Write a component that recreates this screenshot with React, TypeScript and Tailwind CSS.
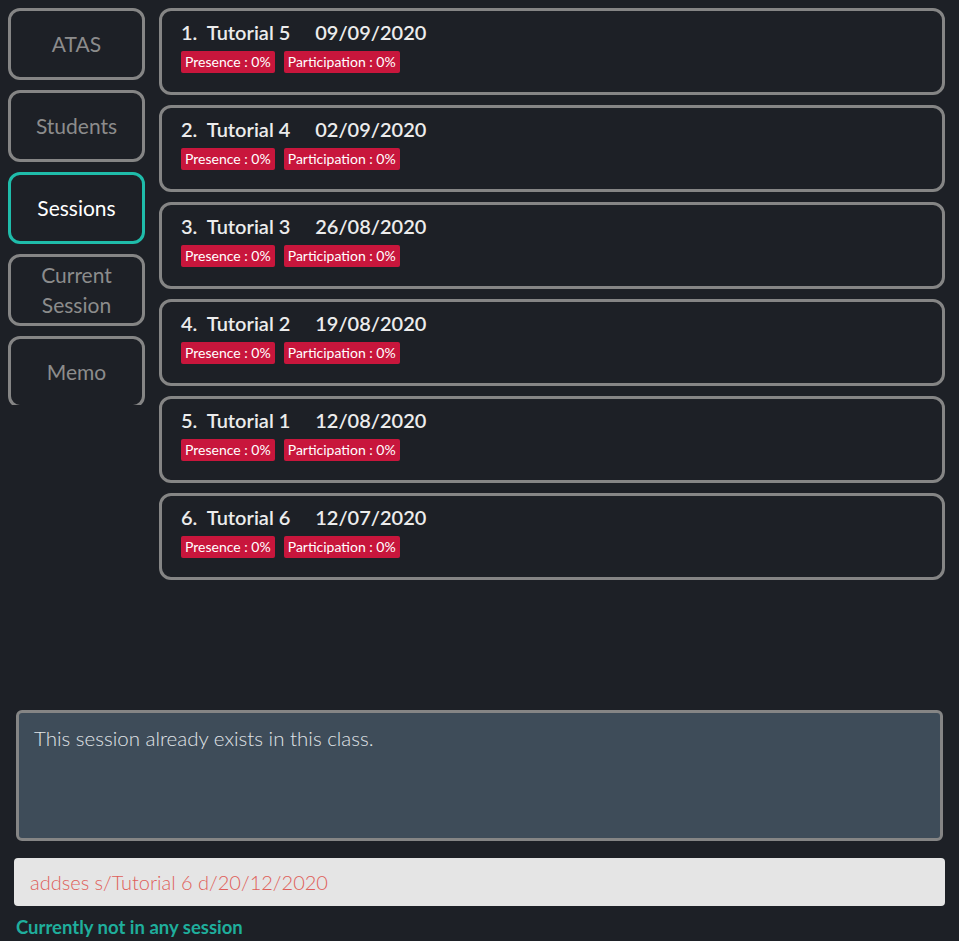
const sessions = [
  { name: "Tutorial 5", date: "09/09/2020" },
  { name: "Tutorial 4", date: "02/09/2020" },
  { name: "Tutorial 3", date: "26/08/2020" },
  { name: "Tutorial 2", date: "19/08/2020" },
  { name: "Tutorial 1", date: "12/08/2020" },
  { name: "Tutorial 6", date: "12/07/2020" },
];

const tabs = [
  { label: "ATAS", active: false },
  { label: "Students", active: false },
  { label: "Sessions", active: true },
  { label: "Current Session", active: false },
  { label: "Memo", active: false },
];

function Tab({ label, active }: { label: string; active: boolean }) {
  return (
    <div
      className={
        active
          ? "flex h-[72px] w-[137px] shrink-0 items-center justify-center rounded-[12px] border-[3px] border-[#1fbcaa] px-3 text-center text-[21px] leading-[30px] text-white"
          : "flex h-[72px] w-[137px] shrink-0 items-center justify-center rounded-[12px] border-[3px] border-[#858585] px-3 text-center text-[21px] leading-[30px] text-[#8c8c8c]"
      }
    >
      {label}
    </div>
  );
}

function SessionCard({ index, name, date }: { index: number; name: string; date: string }) {
  return (
    <div className="h-[87px] shrink-0 rounded-[12px] border-[3px] border-[#858585] pl-[19px] pt-[8px]">
      <div className="whitespace-pre text-[20px] font-semibold leading-[26px] text-[#ececec]">
        {`${index}.  ${name}     ${date}`}
      </div>
      <div className="mt-[6px] flex gap-[9px] text-[14px] leading-[22px] text-white">
        <span className="rounded-[2px] bg-[#c8163c] px-[4px]">Presence : 0%</span>
        <span className="rounded-[2px] bg-[#c8163c] px-[4px]">Participation : 0%</span>
      </div>
    </div>
  );
}

export default function App() {
  return (
    <div
      className="flex h-[941px] w-[959px] flex-col overflow-hidden bg-[#1d2026]"
      style={{ fontFamily: "Lato, 'Open Sans', sans-serif" }}
    >
      <div className="flex h-[700px] gap-[14px] pl-[8px] pr-[14px] pt-[8px]">
        <div className="flex h-[397px] flex-col gap-[10px] overflow-hidden">
          {tabs.map((t) => (
            <Tab key={t.label} label={t.label} active={t.active} />
          ))}
        </div>
        <div className="flex flex-1 flex-col gap-[10px]">
          {sessions.map((s, i) => (
            <SessionCard key={i} index={i + 1} name={s.name} date={s.date} />
          ))}
        </div>
      </div>
      <div className="mx-[16px] mt-[10px] h-[131px] rounded-[6px] border-[3px] border-[#858585] bg-[#3e4c59] px-[15px] pt-[10px] text-[20.5px] font-light leading-[30px] text-[#e0e4e8]">
        This session already exists in this class.
      </div>
      <div className="mx-[14px] mt-[17px] flex h-[48px] items-center rounded-[4px] bg-[#e5e5e5] px-[16px] text-[20px] font-light text-[#df5f5a]">
        addses s/Tutorial 6 d/20/12/2020
      </div>
      <div className="ml-[16px] mt-[9px] text-[18.5px] font-bold leading-[24px] text-[#1fae9c]">
        Currently not in any session
      </div>
    </div>
  );
}
